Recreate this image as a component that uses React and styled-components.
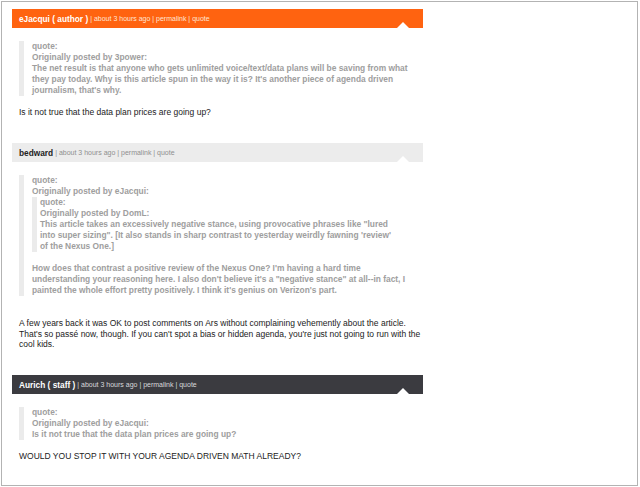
import React from 'react';
import styled, { createGlobalStyle, css } from 'styled-components';

const GlobalStyle = createGlobalStyle`
  html, body {
    margin: 0;
    padding: 0;
    background: #fff;
  }
  body {
    font-family: 'Liberation Sans', Arial, Helvetica, sans-serif;
  }
`;

// header colour schemes per commenter role
const variants = {
  author: { bg: '#ff6310', name: '#ffffff', meta: '#ffe6d6' },
  member: { bg: '#ececec', name: '#222222', meta: '#8f8f8f' },
  staff: { bg: '#3b3b40', name: '#ffffff', meta: '#d9d9dc' },
};

const comments = [
  {
    id: 1,
    user: 'eJacqui',
    role: 'author',
    quote: {
      by: '3power',
      text: "The net result is that anyone who gets unlimited voice/text/data plans will be saving from what they pay today. Why is this article spun in the way it is? It's another piece of agenda driven journalism, that's why.",
    },
    body: 'Is it not true that the data plan prices are going up?',
  },
  {
    id: 2,
    user: 'bedward',
    role: 'member',
    quote: {
      by: 'eJacqui',
      nested: {
        by: 'DomL',
        text: 'This article takes an excessively negative stance, using provocative phrases like "lured into super sizing". [It also stands in sharp contrast to yesterday weirdly fawning \'review\' of the Nexus One.]',
      },
      text: 'How does that contrast a positive review of the Nexus One? I\'m having a hard time understanding your reasoning here. I also don\'t believe it\'s a "negative stance" at all--in fact, I painted the whole effort pretty positively. I think it\'s genius on Verizon\'s part.',
    },
    body: "A few years back it was OK to post comments on Ars without complaining vehemently about the article. That's so passé now, though. If you can't spot a bias or hidden agenda, you're just not going to run with the cool kids.",
    spaced: true,
  },
  {
    id: 3,
    user: 'Aurich',
    role: 'staff',
    quote: {
      by: 'eJacqui',
      text: 'Is it not true that the data plan prices are going up?',
    },
    body: 'WOULD YOU STOP IT WITH YOUR AGENDA DRIVEN MATH ALREADY?',
  },
];

const Quote = ({ data, nested }) => (
  <QuoteBlock $nested={nested}>
    <div>quote:</div>
    <div>Originally posted by {data.by}:</div>
    {data.nested && <Quote data={data.nested} nested />}
    {data.nested ? <QuoteAfter>{data.text}</QuoteAfter> : <div>{data.text}</div>}
  </QuoteBlock>
);

const Comment = ({ comment }) => {
  const scheme = variants[comment.role];
  return (
    <article>
      <Header $bg={scheme.bg}>
        <Name $color={scheme.name}>
          {comment.user}
          {comment.role !== 'member' && ` ( ${comment.role} )`}
        </Name>
        <Meta $color={scheme.meta}>
          | about 3 hours ago | permalink | quote
        </Meta>
      </Header>
      <Content>
        <Quote data={comment.quote} />
        <Body $spaced={comment.spaced}>{comment.body}</Body>
      </Content>
    </article>
  );
};

const App = () => {
  return (
    <>
      <GlobalStyle />
      <Frame>
        <Thread>
          {comments.map((c) => (
            <Comment key={c.id} comment={c} />
          ))}
        </Thread>
      </Frame>
    </>
  );
};

const Frame = styled.div`
  box-sizing: border-box;
  width: 637px;
  height: 485px;
  margin: 1px;
  border: 1px solid #b3b3b3;
  padding: 7px 0 0 10px;
  overflow: hidden;
`;

const Thread = styled.div`
  display: flex;
  flex-direction: column;
  gap: 25.5px;
  width: 411px;
`;

const Header = styled.div`
  position: relative;
  box-sizing: border-box;
  height: 19px;
  padding-left: 7px;
  display: flex;
  align-items: center;
  gap: 2px;
  background: ${(p) => p.$bg};
  white-space: nowrap;

  /* little notch cut into the bottom edge */
  &::after {
    content: '';
    position: absolute;
    right: 14px;
    bottom: 0;
    border-left: 6px solid transparent;
    border-right: 6px solid transparent;
    border-bottom: 6px solid #fff;
  }
`;

const Name = styled.span`
  font-size: 8.3px;
  font-weight: bold;
  color: ${(p) => p.$color};
`;

const Meta = styled.span`
  font-size: 7px;
  color: ${(p) => p.$color};
`;

const Content = styled.div`
  padding-left: 7px;
  padding-right: 1px;
`;

const QuoteBlock = styled.div`
  border-left: 5px solid #ebebeb;
  font-size: 8.4px;
  line-height: 11px;
  font-weight: bold;
  color: #9e9e9e;
  ${(p) =>
    p.$nested
      ? css`
          padding-left: 3px;
          margin-right: 18px;
        `
      : css`
          margin-top: 13px;
          margin-right: 4px;
          padding-left: 8px;
        `}
`;

const QuoteAfter = styled.div`
  margin-top: 11px;
`;

const Body = styled.p`
  margin: ${(p) => (p.$spaced ? '22px' : '11px')} 0 0;
  font-size: 8.5px;
  line-height: 10.5px;
  color: #222;
`;

export default App;
